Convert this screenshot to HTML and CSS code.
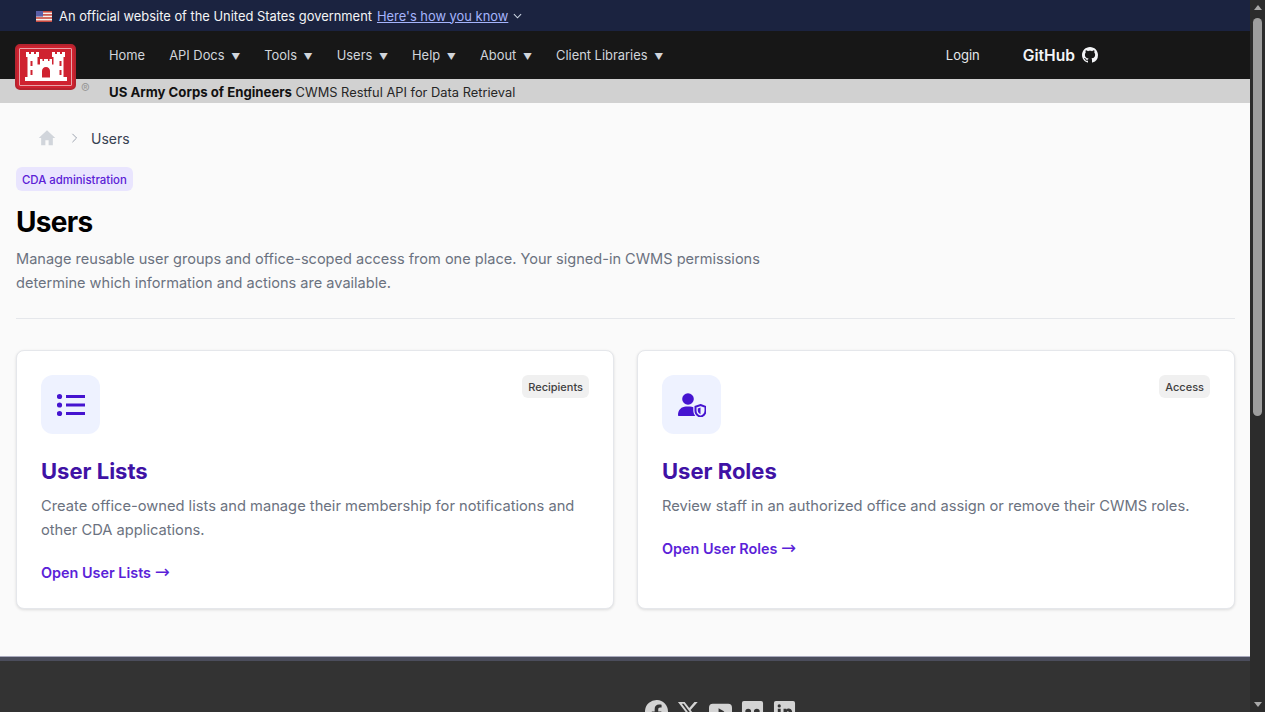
FILE: index.html
```html
<!DOCTYPE html>
<html lang="en">
<head>
    <meta charset="UTF-8">
    <meta name="viewport" content="width=device-width, initial-scale=1.0">
    <title>Users</title>
    <link rel="stylesheet" href="styles.css">
</head>
<body>
<div class="window">
    <div class="page">
        <div class="gov-banner">
            <svg class="flag" viewBox="0 0 16 11" aria-hidden="true">
                <rect width="16" height="11" fill="#f4f1ee"/>
                <rect width="16" height="1.6" fill="#c8493f"/>
                <rect y="3.1" width="16" height="1.6" fill="#c8493f"/>
                <rect y="6.2" width="16" height="1.6" fill="#c8493f"/>
                <rect y="9.4" width="16" height="1.6" fill="#c8493f"/>
                <rect width="7" height="5.6" fill="#5a5fa8"/>
            </svg>
            <span>An official website of the United States government</span>
            <a class="gov-link" href="#">Here's how you know</a>
            <svg class="gov-chevron" viewBox="0 0 10 6" aria-hidden="true"><path d="M1 1l4 4 4-4" fill="none" stroke="currentColor" stroke-width="1.2"/></svg>
        </div>

        <nav class="topnav">
            <ul class="nav-links">
                <li>Home</li>
                <li>API Docs <span class="caret">▼</span></li>
                <li>Tools <span class="caret">▼</span></li>
                <li>Users <span class="caret">▼</span></li>
                <li>Help <span class="caret">▼</span></li>
                <li>About <span class="caret">▼</span></li>
                <li>Client Libraries <span class="caret">▼</span></li>
            </ul>
            <a class="login" href="#">Login</a>
            <a class="github" href="#">GitHub
                <svg viewBox="0 0 16 16" aria-hidden="true"><path fill="currentColor" d="M8 0C3.58 0 0 3.58 0 8c0 3.54 2.29 6.53 5.47 7.59.4.07.55-.17.55-.38 0-.19-.01-.82-.01-1.49-2.01.37-2.53-.49-2.69-.94-.09-.23-.48-.94-.82-1.13-.28-.15-.68-.52-.01-.53.63-.01 1.08.58 1.23.82.72 1.21 1.87.87 2.33.66.07-.52.28-.87.51-1.07-1.78-.2-3.64-.89-3.64-3.95 0-.87.31-1.59.82-2.15-.08-.2-.36-1.02.08-2.12 0 0 .67-.21 2.2.82.64-.18 1.32-.27 2-.27s1.36.09 2 .27c1.53-1.04 2.2-.82 2.2-.82.44 1.1.16 1.92.08 2.12.51.56.82 1.27.82 2.15 0 3.07-1.87 3.75-3.65 3.95.29.25.54.73.54 1.48 0 1.07-.01 1.93-.01 2.2 0 .21.15.46.55.38A8.01 8.01 0 0 0 16 8c0-4.42-3.58-8-8-8z"/></svg>
            </a>
        </nav>

        <div class="subbar"><strong>US Army Corps of Engineers</strong> CWMS Restful API for Data Retrieval</div>

        <a class="castle-logo" href="#" aria-label="US Army Corps of Engineers">
            <svg viewBox="0 0 42 29" aria-hidden="true">
                <path fill="#fff" fill-rule="evenodd" d="M1 0h3v2h2V0h3v2h2V0h3v5h-1.500v7.500H15V7h2.500v2h1.500V7h4v2h1.500V7H27v5.500h1.500V5H27V0h3v2h2V0h3v2h2V0h3v5h-1.500v20H42v4H0v-4h2.500V5H1zM5.500 9v5h2V9zm29 0v5h2V9zM5.500 18v5h2v-5zm29 0v5h2v-5zM21 15c-2.500 0-4 2-4 4v6.500h8V19c0-2-1.500-4-4-4z"/>
            </svg>
        </a>
        <span class="registered">®</span>

        <main class="content">
            <div class="breadcrumb">
                <svg class="crumb-home" viewBox="0 0 20 20" aria-hidden="true"><path fill="currentColor" d="M10 1.500L.8 10h2.700v8h4.700v-5.500h3.600V18h4.700v-8h2.700z"/></svg>
                <svg class="crumb-sep" viewBox="0 0 8 12" aria-hidden="true"><path d="M1.500 1l5 5-5 5" fill="none" stroke="currentColor" stroke-width="1.200"/></svg>
                <span>Users</span>
            </div>

            <span class="pill">CDA administration</span>
            <h1>Users</h1>
            <p class="lead">Manage reusable user groups and office-scoped access from one place. Your signed-in CWMS permissions determine which information and actions are available.</p>
            <hr class="divider">

            <div class="card-grid">
                <section class="card">
                    <div class="card-top">
                        <div class="card-icon">
                            <svg viewBox="0 0 28 24" aria-hidden="true">
                                <circle cx="2.500" cy="3.500" r="2.600" fill="currentColor"/>
                                <circle cx="2.500" cy="12" r="2.600" fill="currentColor"/>
                                <circle cx="2.500" cy="20.500" r="2.600" fill="currentColor"/>
                                <path d="M9 3.500h19M9 12h19M9 20.500h19" stroke="currentColor" stroke-width="3"/>
                            </svg>
                        </div>
                        <span class="tag">Recipients</span>
                    </div>
                    <h2>User Lists</h2>
                    <p>Create office-owned lists and manage their membership for notifications and other CDA applications.</p>
                    <a class="card-link" href="#">Open User Lists <span class="arrow">→</span></a>
                </section>

                <section class="card">
                    <div class="card-top">
                        <div class="card-icon">
                            <svg viewBox="0 0 28 24" aria-hidden="true">
                                <circle cx="10" cy="6" r="5.800" fill="currentColor"/>
                                <path fill="currentColor" d="M0 22c0-5 3.500-8.500 8-8.500h4c1.200 0 2.300.2 3.300.7v3.300c0 2 .8 4 2 5.500H1c-.6 0-1-.4-1-1z"/>
                                <path fill="none" stroke="currentColor" stroke-width="2" d="M22.500 12l5 1.800v4c0 3-2.200 5-5 6-2.800-1-5-3-5-6v-4z"/>
                                <path fill="currentColor" d="M22.500 14.500l-2.700 1v2.300c0 1.600 1.200 2.800 2.700 3.400z"/>
                            </svg>
                        </div>
                        <span class="tag">Access</span>
                    </div>
                    <h2>User Roles</h2>
                    <p>Review staff in an authorized office and assign or remove their CWMS roles.</p>
                    <a class="card-link" href="#">Open User Roles <span class="arrow">→</span></a>
                </section>
            </div>
        </main>

        <footer class="site-footer">
            <div class="socials">
                <svg viewBox="0 0 24 24" aria-label="Facebook"><path fill="currentColor" d="M24 12a12 12 0 1 0-13.900 11.900v-8.400H7.100V12h3V9.400c0-3 1.800-4.700 4.500-4.700 1.300 0 2.700.2 2.700.2v3h-1.500c-1.500 0-2 .9-2 1.900V12h3.300l-.5 3.500h-2.800v8.400A12 12 0 0 0 24 12z"/></svg>
                <svg viewBox="0 0 24 24" aria-label="X"><path fill="currentColor" d="M18.200 2h3.400l-7.400 8.500L23 22h-6.800l-5.300-7-6.100 7H1.400l7.900-9.100L1 2h7l4.800 6.400zm-1.200 18h1.900L7 3.900H5z"/></svg>
                <svg viewBox="0 0 24 24" aria-label="YouTube"><path fill="currentColor" fill-rule="evenodd" d="M4 4h16a4 4 0 0 1 4 4v8a4 4 0 0 1-4 4H4a4 4 0 0 1-4-4V8a4 4 0 0 1 4-4zm6 4.500v7l6-3.500z"/></svg>
                <svg viewBox="0 0 24 24" aria-label="Flickr"><path fill="currentColor" fill-rule="evenodd" d="M3 1h18a2 2 0 0 1 2 2v18a2 2 0 0 1-2 2H3a2 2 0 0 1-2-2V3a2 2 0 0 1 2-2zm4.500 8a3 3 0 1 0 0 6 3 3 0 0 0 0-6zm9 0a3 3 0 1 0 0 6 3 3 0 0 0 0-6z"/></svg>
                <svg viewBox="0 0 24 24" aria-label="LinkedIn"><path fill="currentColor" fill-rule="evenodd" d="M3 1h18a2 2 0 0 1 2 2v18a2 2 0 0 1-2 2H3a2 2 0 0 1-2-2V3a2 2 0 0 1 2-2zm2 8v10h3V9zm1.500-4.500a1.700 1.700 0 1 0 0 3.400 1.700 1.700 0 0 0 0-3.400zM11 9v10h3v-5c0-3 3-3 3 0v5h3v-6c0-5-5-5-6-3V9z"/></svg>
            </div>
        </footer>
    </div>

    <div class="scrollbar" aria-hidden="true">
        <span class="scroll-arrow"></span>
        <span class="scroll-thumb"></span>
        <span class="scroll-arrow scroll-arrow-down"></span>
    </div>
</div>
</body>
</html>
```

FILE: styles.css
```css
html, body {
    margin: 0;
    padding: 0;
    height: 100%;
    overflow: hidden;
}
body {
    font-family: 'Inter', 'Liberation Sans', sans-serif;
    color: #111827;
    background-color: #fafafa;
}
.window {
    display: flex;
    height: 712px;
}
.page {
    position: relative;
    flex: 1;
    min-width: 0;
    overflow: hidden;
    display: flex;
    flex-direction: column;
}

/* Government banner */
.gov-banner {
    height: 31px;
    flex: none;
    box-sizing: border-box;
    display: flex;
    align-items: center;
    padding: 1px 0 0 36px;
    background-color: #1b2340;
    color: #f3f4f6;
    font-size: 12.9px;
}
.flag {
    width: 16px;
    height: 11px;
    margin-right: 7px;
}
.gov-link {
    margin-left: 5px;
    color: #a5b4fc;
    text-decoration: underline;
}
.gov-chevron {
    width: 9px;
    height: 6px;
    margin-left: 5px;
    color: #cbd5e1;
}

/* Main navigation */
.topnav {
    height: 48px;
    flex: none;
    display: flex;
    align-items: center;
    padding-left: 109px;
    background-color: #171717;
    color: #d1d5db;
    font-size: 12.9px;
}
.nav-links {
    display: flex;
    gap: 24px;
    list-style: none;
    margin: 0;
    padding: 0;
}
.caret {
    font-size: 9px;
    margin-left: 3px;
}
.login {
    margin-left: auto;
    color: #e5e7eb;
    font-size: 13px;
    text-decoration: none;
}
.github {
    display: flex;
    align-items: center;
    gap: 7px;
    margin-left: 43px;
    margin-right: 152px;
    color: #f3f4f6;
    font-size: 15.6px;
    font-weight: 600;
    text-decoration: none;
}
.github svg {
    width: 16px;
    height: 16px;
}
.subbar {
    height: 24px;
    flex: none;
    box-sizing: border-box;
    padding-left: 109px;
    line-height: 26px;
    background-color: #d1d1d1;
    color: #262626;
    font-size: 12.85px;
}
.subbar strong {
    color: #111;
    font-size: 13.2px;
}
.castle-logo {
    position: absolute;
    left: 15px;
    top: 44px;
    width: 61px;
    height: 46px;
    box-sizing: border-box;
    padding: 6px 7px 7px 8px;
    display: flex;
    background-color: #cf2230;
    border: 2px solid #b5242f;
    outline: 1px solid #e9a3a8;
    outline-offset: -5px;
    border-radius: 5px;
}
.castle-logo svg {
    width: 100%;
    height: 100%;
}
.registered {
    position: absolute;
    left: 81px;
    top: 80px;
    color: #9a9a9a;
    font-size: 13px;
}

/* Page content */
.content {
    flex: none;
    height: 554px;
    box-sizing: border-box;
    padding: 0 15px 0 16px;
    background-color: #fafafa;
}
.breadcrumb {
    display: flex;
    align-items: center;
    height: 20px;
    margin-top: 25px;
    padding-left: 22px;
    color: #374151;
    font-size: 14px;
}
.crumb-home {
    width: 18px;
    height: 18px;
    color: #d1d5db;
}
.crumb-sep {
    width: 7px;
    height: 10px;
    margin: 0 13px 0 15px;
    color: #9ca3af;
}
.pill {
    display: inline-block;
    margin-top: 19px;
    padding: 0 6px;
    height: 24px;
    line-height: 26px;
    border-radius: 6px;
    background-color: #e9e5fe;
    color: #5b21d6;
    font-size: 11.4px;
    font-weight: 500;
}
h1 {
    margin: 14px 0 0;
    font-size: 28px;
    line-height: 35px;
    font-weight: 700;
    letter-spacing: -0.025em;
    color: #000;
}
.lead {
    max-width: 768px;
    margin: 7px 0 0;
    font-size: 14.55px;
    line-height: 24px;
    color: #6b7280;
}
.divider {
    margin: 23px 0 31px;
    border: none;
    border-top: 1px solid #e5e7eb;
}
.card-grid {
    display: grid;
    grid-template-columns: 1fr 1fr;
    gap: 23px;
}
.card {
    height: 259px;
    box-sizing: border-box;
    padding: 24px;
    background-color: #fff;
    border: 1px solid #e5e7eb;
    border-radius: 8px;
    box-shadow: 0 1px 3px rgba(0, 0, 0, 0.12);
}
.card-top {
    display: flex;
    justify-content: space-between;
    align-items: flex-start;
}
.card-icon {
    width: 59px;
    height: 59px;
    display: flex;
    align-items: center;
    justify-content: center;
    border-radius: 12px;
    background-color: #eef2ff;
    color: #4514d0;
}
.card-icon svg {
    width: 28px;
    height: 24px;
}
.tag {
    padding: 0 6px;
    height: 23px;
    line-height: 24px;
    border-radius: 6px;
    background-color: #f0f0f0;
    color: #404040;
    font-size: 11px;
    font-weight: 500;
}
.card h2 {
    margin: 21px 0 0;
    font-size: 22px;
    line-height: 32px;
    font-weight: 700;
    color: #3f12a5;
}
.card p {
    margin: 7px 0 0;
    font-size: 14.7px;
    line-height: 24px;
    color: #6b7280;
}
.card-link {
    display: inline-block;
    margin-top: 19px;
    color: #5b1fd8;
    font-size: 14.4px;
    font-weight: 600;
    line-height: 24px;
    text-decoration: none;
}
.arrow {
    font-family: 'DejaVu Sans', sans-serif;
    font-size: 18px;
    font-weight: 400;
    line-height: 0;
}

/* Footer */
.site-footer {
    flex: 1;
    background-color: #333;
    border-top: 4px solid #4b4d5c;
    box-shadow: 0 -1px 0 #a9aabd;
}
.socials {
    display: flex;
    justify-content: center;
    gap: 9px;
    margin-top: 39px;
    padding-left: 191px;
    color: #d4d4d4;
}
.socials svg {
    width: 23px;
    height: 23px;
    flex: none;
}

/* Scrollbar */
.scrollbar {
    width: 15px;
    flex: none;
    display: flex;
    flex-direction: column;
    align-items: center;
    background-color: #2c2c2c;
}
.scroll-arrow {
    flex: none;
    margin-top: 5px;
    border-left: 4px solid transparent;
    border-right: 4px solid transparent;
    border-bottom: 5px solid #a8a8a8;
}
.scroll-thumb {
    width: 9px;
    height: 398px;
    margin-top: 8px;
    border-radius: 5px;
    background-color: #9e9e9e;
}
.scroll-arrow-down {
    margin-top: auto;
    margin-bottom: 5px;
    border-bottom: none;
    border-top: 5px solid #a8a8a8;
}
```
